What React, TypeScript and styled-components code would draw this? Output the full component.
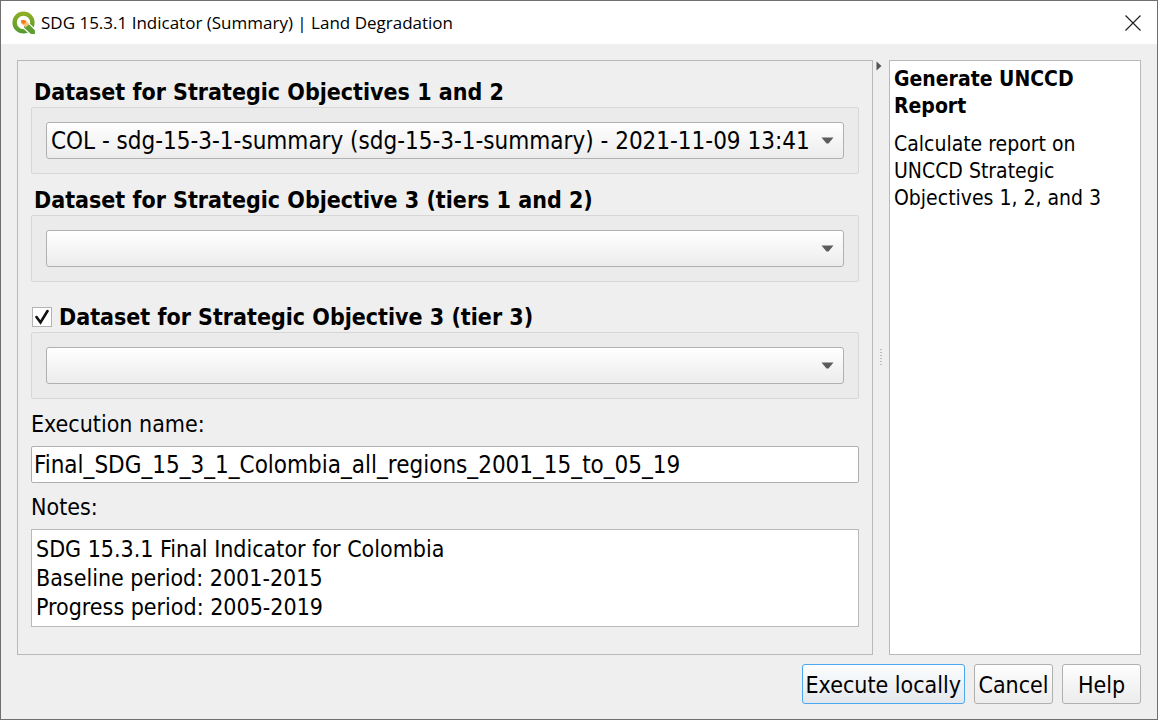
import React, { useState } from "react";
import styled, { createGlobalStyle } from "styled-components";

const GlobalStyle = createGlobalStyle`
  *, *::before, *::after { box-sizing: border-box; }
  body {
    margin: 0;
    background: #efefef;
    color: #000;
    font-family: "DejaVu Sans Condensed", Tahoma, "DejaVu Sans", sans-serif;
    font-size: 23px;
    line-height: 28px;
  }
  button, input, select, textarea { font: inherit; color: inherit; }
`;

const Dialog = styled.div`
  display: flex;
  flex-direction: column;
  min-height: 100vh;
  border: 1px solid #6f6f6f;
  background: #efefef;
`;

const TitleBar = styled.header`
  display: flex;
  align-items: center;
  gap: 5px;
  height: 43px;
  padding: 0 8px 0 11px;
  background: #fff;
`;

const Title = styled.h1`
  flex: 1;
  margin: 0;
  font: 400 17px/24px "Open Sans", "Segoe UI", sans-serif;
`;

const CloseButton = styled.button`
  display: grid;
  place-items: center;
  width: 32px;
  height: 32px;
  padding: 0;
  border: 0;
  background: none;
`;

const Body = styled.main`
  flex: 1;
  display: flex;
  padding: 16px 16px 0;
`;

const Form = styled.form`
  flex: 1;
  min-width: 0;
  display: flex;
  flex-direction: column;
  padding: 16px 13px 27px;
  border: 1px solid #b9b9b9;
`;

const Splitter = styled.div`
  display: grid;
  grid-template-rows: 12px 1fr 12px;
  justify-items: center;
  align-items: center;
  width: 16px;
`;

const CollapseButton = styled.button`
  display: grid;
  place-items: center;
  justify-self: start;
  width: 12px;
  height: 12px;
  padding: 0;
  border: 0;
  background: none;
`;

const HelpPanel = styled.aside`
  width: 252px;
  padding: 5px 4px;
  border: 1px solid #b9b9b9;
  background: #fff;
  font-size: 21px;
  line-height: 27px;
`;

const HelpTitle = styled.h2`
  margin: 0 0 11px;
  font-size: inherit;
  font-weight: 700;
`;

const HelpText = styled.p`
  margin: 0;
`;

const Group = styled.section<{ $gap: number }>`
  margin-bottom: ${(p) => p.$gap}px;
`;

const GroupHeading = styled.label`
  display: flex;
  align-items: center;
  gap: 7px;
  height: 30px;
  padding-left: 3px;
  font-weight: 700;
`;

const CheckHeading = styled(GroupHeading)`
  padding-left: 1px;
`;

const CheckCell = styled.span`
  display: grid;
  width: 20px;
  height: 20px;
  & > * { grid-area: 1 / 1; }
  & > svg { pointer-events: none; place-self: center; visibility: hidden; }
  & > input:checked + svg { visibility: visible; }
`;

const Checkbox = styled.input`
  appearance: none;
  width: 20px;
  height: 20px;
  margin: 0;
  border: 1px solid #b4b4b4;
  background: #fff;
`;

const GroupBox = styled.div`
  padding: 14px;
  border: 1px solid #d7d7d7;
  border-radius: 2px;
  background: #ebebeb;
`;

const SelectWrap = styled.div`
  display: grid;
  align-items: center;
  & > * { grid-area: 1 / 1; }
  & > svg { justify-self: end; margin-right: 10px; pointer-events: none; }
`;

const Select = styled.select`
  appearance: none;
  width: 100%;
  height: 37px;
  padding: 0 30px 0 4px;
  border: 1px solid #b0b0b0;
  border-radius: 3px;
  background: linear-gradient(#fff, #ececec);
  font-size: 24px;
`;

const FieldLabel = styled.label`
  display: block;
  margin-bottom: 8px;
`;

const TextInput = styled.input`
  width: 100%;
  height: 37px;
  margin-bottom: 10px;
  padding: 0 2px;
  border: 1px solid #b0b0b0;
  border-radius: 2px;
  background: #fff;
  font-size: 24px;
`;

const Notes = styled.textarea`
  flex: 1;
  width: 100%;
  min-height: 98px;
  padding: 5px 4px 4px;
  border: 1px solid #b9b9b9;
  background: #fff;
  line-height: 29px;
  resize: none;
  overflow: auto;
`;

const Actions = styled.footer`
  display: flex;
  justify-content: flex-end;
  gap: 9px;
  padding: 9px 16px 15px;
`;

const ActionButton = styled.button<{ $primary?: boolean }>`
  min-width: 79px;
  height: 40px;
  padding: 2px 3px 0;
  border: 1px solid ${(p) => (p.$primary ? "#4aa7f0" : "#b0b0b0")};
  border-radius: 3px;
  background: ${(p) =>
    p.$primary ? "linear-gradient(#fcfdfe, #e3e8ed)" : "linear-gradient(#fefefe, #ececec)"};
  white-space: nowrap;
`;

const QgisLogo = () => (
  <svg width="24" height="24" viewBox="0 0 24 24" aria-hidden="true">
    <defs>
      <linearGradient id="ring" gradientUnits="userSpaceOnUse" x1="0" y1="0" x2="0" y2="23">
        <stop offset="0" stopColor="#93b023" />
        <stop offset="1" stopColor="#4f9a30" />
      </linearGradient>
    </defs>
    <circle cx="11.500" cy="11.500" r="8.900" fill="none" stroke="url(#ring)" strokeWidth="4.400" />
    <path d="M11.500 12.500h5.500l6.500 6.500v4.500h-5l-7-6.500Z" fill="#5f9f2f" stroke="#fff" strokeWidth="1.200" />
    <path d="M9.300 9h4.500l3.400 4.200-3.600 3.400-4.300-4Z" fill="#f6c179" />
    <path d="M9.300 9h3.200l1.500 2-2 2-2.700-1Z" fill="#ee7c1a" />
  </svg>
);

const DropArrow = () => (
  <svg width="13" height="7" viewBox="0 0 13 7" aria-hidden="true">
    <path d="M.5 .5h12L7.500 6.500h-2Z" fill="#5c5c5c" />
  </svg>
);

type DatasetSelectProps = { id: string; options: string[] };

const DatasetSelect = ({ id, options }: DatasetSelectProps) => (
  <GroupBox>
    <SelectWrap>
      <Select id={id} aria-label="Dataset">
        {options.map((o) => (
          <option key={o}>{o}</option>
        ))}
      </Select>
      <DropArrow />
    </SelectWrap>
  </GroupBox>
);

export default function App() {
  const [tierThree, setTierThree] = useState(true);
  const [name, setName] = useState("Final_SDG_15_3_1_Colombia_all_regions_2001_15_to_05_19");
  const [notes, setNotes] = useState(
    "SDG 15.3.1 Final Indicator for Colombia\nBaseline period: 2001-2015\nProgress period: 2005-2019"
  );

  return (
    <>
      <GlobalStyle />
      <Dialog role="dialog" aria-labelledby="title">
        <TitleBar>
          <QgisLogo />
          <Title id="title">SDG 15.3.1 Indicator (Summary) | Land Degradation</Title>
          <CloseButton type="button" aria-label="Close">
            <svg width="16" height="16" viewBox="0 0 16 16" aria-hidden="true">
              <path d="M.5 .5l15 15M15.500 .5l-15 15" stroke="#222" strokeWidth="1.2" />
            </svg>
          </CloseButton>
        </TitleBar>
        <Body>
          <Form id="report" onSubmit={(e) => e.preventDefault()}>
            <Group $gap={11}>
              <GroupHeading htmlFor="so12">Dataset for Strategic Objectives 1 and 2</GroupHeading>
              <DatasetSelect
                id="so12"
                options={["COL - sdg-15-3-1-summary (sdg-15-3-1-summary) - 2021-11-09 13:41"]}
              />
            </Group>
            <Group $gap={20}>
              <GroupHeading htmlFor="so3">Dataset for Strategic Objective 3 (tiers 1 and 2)</GroupHeading>
              <DatasetSelect id="so3" options={[""]} />
            </Group>
            <Group $gap={11}>
              <CheckHeading>
                <CheckCell>
                  <Checkbox
                    type="checkbox"
                    checked={tierThree}
                    onChange={(e) => setTierThree(e.target.checked)}
                  />
                  <svg width="14" height="16" viewBox="0 0 14 16" aria-hidden="true">
                    <path
                      d="M1.500 8L5.500 13.500L12.500 2"
                      fill="none"
                      stroke="#111"
                      strokeWidth="2.600"
                      strokeLinecap="round"
                    />
                  </svg>
                </CheckCell>
                Dataset for Strategic Objective 3 (tier 3)
              </CheckHeading>
              <DatasetSelect id="so3t3" options={[""]} />
            </Group>
            <FieldLabel htmlFor="name">Execution name:</FieldLabel>
            <TextInput id="name" value={name} onChange={(e) => setName(e.target.value)} />
            <FieldLabel htmlFor="notes">Notes:</FieldLabel>
            <Notes id="notes" value={notes} onChange={(e) => setNotes(e.target.value)} />
          </Form>
          <Splitter>
            <CollapseButton type="button" aria-label="Hide help">
              <svg width="6" height="10" viewBox="0 0 6 10" aria-hidden="true">
                <path d="M.5 .5L5.500 5L.5 9.500Z" fill="#555" />
              </svg>
            </CollapseButton>
            <svg width="2" height="17" viewBox="0 0 2 17" aria-hidden="true">
              <path d="M1 0V17" stroke="#bdbdbd" strokeWidth="2" strokeDasharray="1 2" />
            </svg>
          </Splitter>
          <HelpPanel>
            <HelpTitle>Generate UNCCD Report</HelpTitle>
            <HelpText>Calculate report on UNCCD Strategic Objectives 1, 2, and 3</HelpText>
          </HelpPanel>
        </Body>
        <Actions>
          <ActionButton $primary type="submit" form="report">
            Execute locally
          </ActionButton>
          <ActionButton type="button">Cancel</ActionButton>
          <ActionButton type="button">Help</ActionButton>
        </Actions>
      </Dialog>
    </>
  );
}
